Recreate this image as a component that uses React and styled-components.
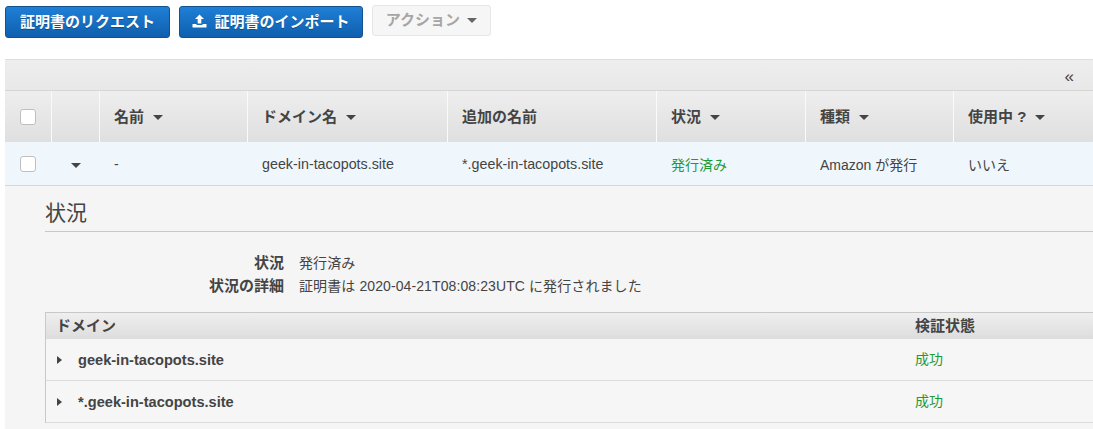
import styled, { createGlobalStyle } from 'styled-components'

const FONT = '"Liberation Sans", "Noto Sans CJK JP", sans-serif'
const COLUMNS = '47px 48px 148px 200px 209px 149px 148px 139px'

const GlobalStyle = createGlobalStyle`
  html, body {
    margin: 0;
    padding: 0;
    background: #fff;
    overflow: hidden;
  }
  body {
    font-family: ${FONT};
    font-size: 14px;
    color: #444;
  }
`

const UploadIcon = () => (
  <svg width="15" height="14" viewBox="0 0 15 14">
    <path d="M7.5 0.5 L12 5 H9.3 V9.5 H5.7 V5 H3 Z" fill="#fff" />
    <path d="M0.5 10 H4.5 V11 H10.5 V10 H14.5 V13.5 H0.5 Z" fill="#fff" />
  </svg>
)

const headers = [
  { label: '名前', sort: true },
  { label: 'ドメイン名', sort: true },
  { label: '追加の名前' },
  { label: '状況', sort: true },
  { label: '種類', sort: true },
  { label: '使用中 ?', sort: true },
]

const domains = ['geek-in-tacopots.site', '*.geek-in-tacopots.site']

export default function App() {
  return (
    <S.Page>
      <GlobalStyle />
      <S.Toolbar>
        <S.PrimaryButton $width={165}>証明書のリクエスト</S.PrimaryButton>
        <S.PrimaryButton $width={184}>
          <UploadIcon />
          証明書のインポート
        </S.PrimaryButton>
        <S.ActionButton>
          アクション
          <S.Caret $color="#666" $drop={3} />
        </S.ActionButton>
      </S.Toolbar>

      <S.Table>
        <S.TableTop>
          <S.Collapse>«</S.Collapse>
        </S.TableTop>
        <S.HeadRow>
          <S.HeadCell $center>
            <S.Checkbox />
          </S.HeadCell>
          <S.HeadCell />
          {headers.map((header) => (
            <S.HeadCell key={header.label}>
              {header.label}
              {header.sort && <S.Caret $drop={5} />}
            </S.HeadCell>
          ))}
        </S.HeadRow>
        <S.BodyRow>
          <S.BodyCell $center>
            <S.Checkbox />
          </S.BodyCell>
          <S.BodyCell $center>
            <S.Caret $drop={3} />
          </S.BodyCell>
          <S.BodyCell>-</S.BodyCell>
          <S.BodyCell $latin>geek-in-tacopots.site</S.BodyCell>
          <S.BodyCell $latin>*.geek-in-tacopots.site</S.BodyCell>
          <S.BodyCell $green>発行済み</S.BodyCell>
          <S.BodyCell>Amazon が発行</S.BodyCell>
          <S.BodyCell>いいえ</S.BodyCell>
        </S.BodyRow>
        <S.Detail>
          <S.Title>状況</S.Title>
          <S.Info>
            <S.InfoLabel>状況</S.InfoLabel>
            <S.InfoValue>発行済み</S.InfoValue>
            <S.InfoLabel>状況の詳細</S.InfoLabel>
            <S.InfoValue>証明書は 2020-04-21T08:08:23UTC に発行されました</S.InfoValue>
          </S.Info>
          <S.DomainTable>
            <S.DomainHead>
              <span>ドメイン</span>
              <span>検証状態</span>
            </S.DomainHead>
            {domains.map((domain) => (
              <S.DomainRow key={domain}>
                <S.DomainName>
                  <S.SideCaret />
                  {domain}
                </S.DomainName>
                <S.Success>成功</S.Success>
              </S.DomainRow>
            ))}
          </S.DomainTable>
        </S.Detail>
      </S.Table>
    </S.Page>
  )
}

const S = {
  Page: styled.div`
    width: 1093px;
    height: 429px;
    overflow: hidden;
    padding-left: 5px;
    box-sizing: border-box;
  `,
  Toolbar: styled.div`
    display: flex;
    align-items: flex-start;
    gap: 9px;
    height: 59px;
    padding-top: 5px;
    box-sizing: border-box;
  `,
  PrimaryButton: styled.button`
    width: ${(props) => props.$width}px;
    height: 32px;
    margin-top: 1px;
    display: flex;
    align-items: center;
    justify-content: center;
    gap: 7px;
    padding: 0 0 3px;
    border: 1px solid #15508f;
    border-radius: 3px;
    background: linear-gradient(to bottom, #1f7fd6, #0f5fae);
    color: #fff;
    font-family: ${FONT};
    font-size: 15px;
    font-weight: 700;
    text-shadow: 0 1px 0 rgba(0, 0, 0, 0.3);
  `,
  ActionButton: styled.button`
    width: 119px;
    height: 31px;
    display: flex;
    align-items: center;
    justify-content: center;
    gap: 5px;
    padding: 0 0 4px;
    border: 1px solid #e6e6e6;
    border-radius: 3px;
    background: #f6f6f6;
    color: #a6a6a6;
    font-family: ${FONT};
    font-size: 15px;
    font-weight: 700;
  `,
  Caret: styled.span`
    display: inline-block;
    width: 0;
    height: 0;
    border-left: 5px solid transparent;
    border-right: 5px solid transparent;
    border-top: 5px solid ${(props) => props.$color || '#444'};
    margin-left: 2px;
    margin-top: ${(props) => props.$drop || 0}px;
  `,
  SideCaret: styled.span`
    display: inline-block;
    width: 0;
    height: 0;
    border-top: 4px solid transparent;
    border-bottom: 4px solid transparent;
    border-left: 5px solid #444;
    margin-right: 16px;
  `,
  Table: styled.div`
    width: 1088px;
  `,
  TableTop: styled.div`
    height: 32px;
    box-sizing: border-box;
    display: flex;
    align-items: center;
    justify-content: flex-end;
    padding: 3px 19px 0 0;
    border-top: 1px solid #dedede;
    border-bottom: 1px solid #d5d5d5;
    background: linear-gradient(to bottom, #eeeeee, #e8e8e8);
  `,
  Collapse: styled.span`
    font-size: 17px;
    line-height: 20px;
    color: #444;
  `,
  HeadRow: styled.div`
    display: grid;
    grid-template-columns: ${COLUMNS};
    height: 51px;
    background: linear-gradient(to bottom, #eeeeee, #dfdfdf);
  `,
  HeadCell: styled.div`
    display: flex;
    align-items: center;
    justify-content: ${(props) => (props.$center ? 'center' : 'flex-start')};
    gap: 7px;
    padding: ${(props) => (props.$center ? '0' : '0 0 3px 14px')};
    border-right: 1px solid #fafafa;
    font-size: 15px;
    font-weight: 700;
    color: #444;
    box-sizing: border-box;
    &:last-child {
      border-right: 0;
    }
  `,
  BodyRow: styled.div`
    display: grid;
    grid-template-columns: ${COLUMNS};
    height: 44px;
    box-sizing: border-box;
    border-bottom: 1px solid #d8d8d8;
    background: #eff7fd;
  `,
  BodyCell: styled.div`
    display: flex;
    align-items: center;
    justify-content: ${(props) => (props.$center ? 'center' : 'flex-start')};
    padding: ${(props) => (props.$center ? '0 2px 0 0' : '0 0 0 14px')};
    font-size: ${(props) => (props.$latin ? '14.3px' : '14px')};
    color: ${(props) => (props.$green ? '#1d9a3a' : '#444')};
  `,
  Checkbox: styled.span`
    display: block;
    width: 14px;
    height: 14px;
    border: 1px solid #bfbfbf;
    border-radius: 3px;
    background: #fff;
  `,
  Detail: styled.div`
    height: 243px;
    box-sizing: border-box;
    padding: 13px 0 0 40px;
    background: #f5f5f5;
  `,
  Title: styled.div`
    height: 32px;
    font-size: 21px;
    line-height: 28px;
    color: #444;
    border-bottom: 1px solid #c8c8c8;
  `,
  Info: styled.div`
    display: grid;
    grid-template-columns: 239px 1fr;
    column-gap: 15px;
    row-gap: 3px;
    margin-top: 21px;
    margin-bottom: 16px;
    line-height: 20px;
  `,
  InfoLabel: styled.div`
    font-size: 15px;
    font-weight: 700;
    text-align: right;
    color: #444;
  `,
  InfoValue: styled.div`
    font-size: 14px;
    letter-spacing: 0.1px;
    color: #444;
  `,
  DomainTable: styled.div`
    border-left: 1px solid #c8c8c8;
    border-top: 1px solid #c8c8c8;
  `,
  DomainHead: styled.div`
    display: grid;
    grid-template-columns: 859px 1fr;
    height: 26px;
    box-sizing: border-box;
    align-items: center;
    padding: 0 0 3px 10px;
    font-size: 15px;
    font-weight: 700;
    color: #444;
    background: linear-gradient(to bottom, #efefef, #dddddd);
  `,
  DomainRow: styled.div`
    display: grid;
    grid-template-columns: 859px 1fr;
    height: 42px;
    box-sizing: border-box;
    align-items: center;
    padding-left: 11px;
    border-bottom: 1px solid #dcdcdc;
    background: #f6f6f6;
  `,
  DomainName: styled.div`
    display: flex;
    align-items: center;
    font-size: 14.6px;
    font-weight: 700;
    color: #444;
  `,
  Success: styled.div`
    font-size: 14px;
    margin-left: -1px;
    padding-bottom: 4px;
    color: #1d9a3a;
  `,
}
